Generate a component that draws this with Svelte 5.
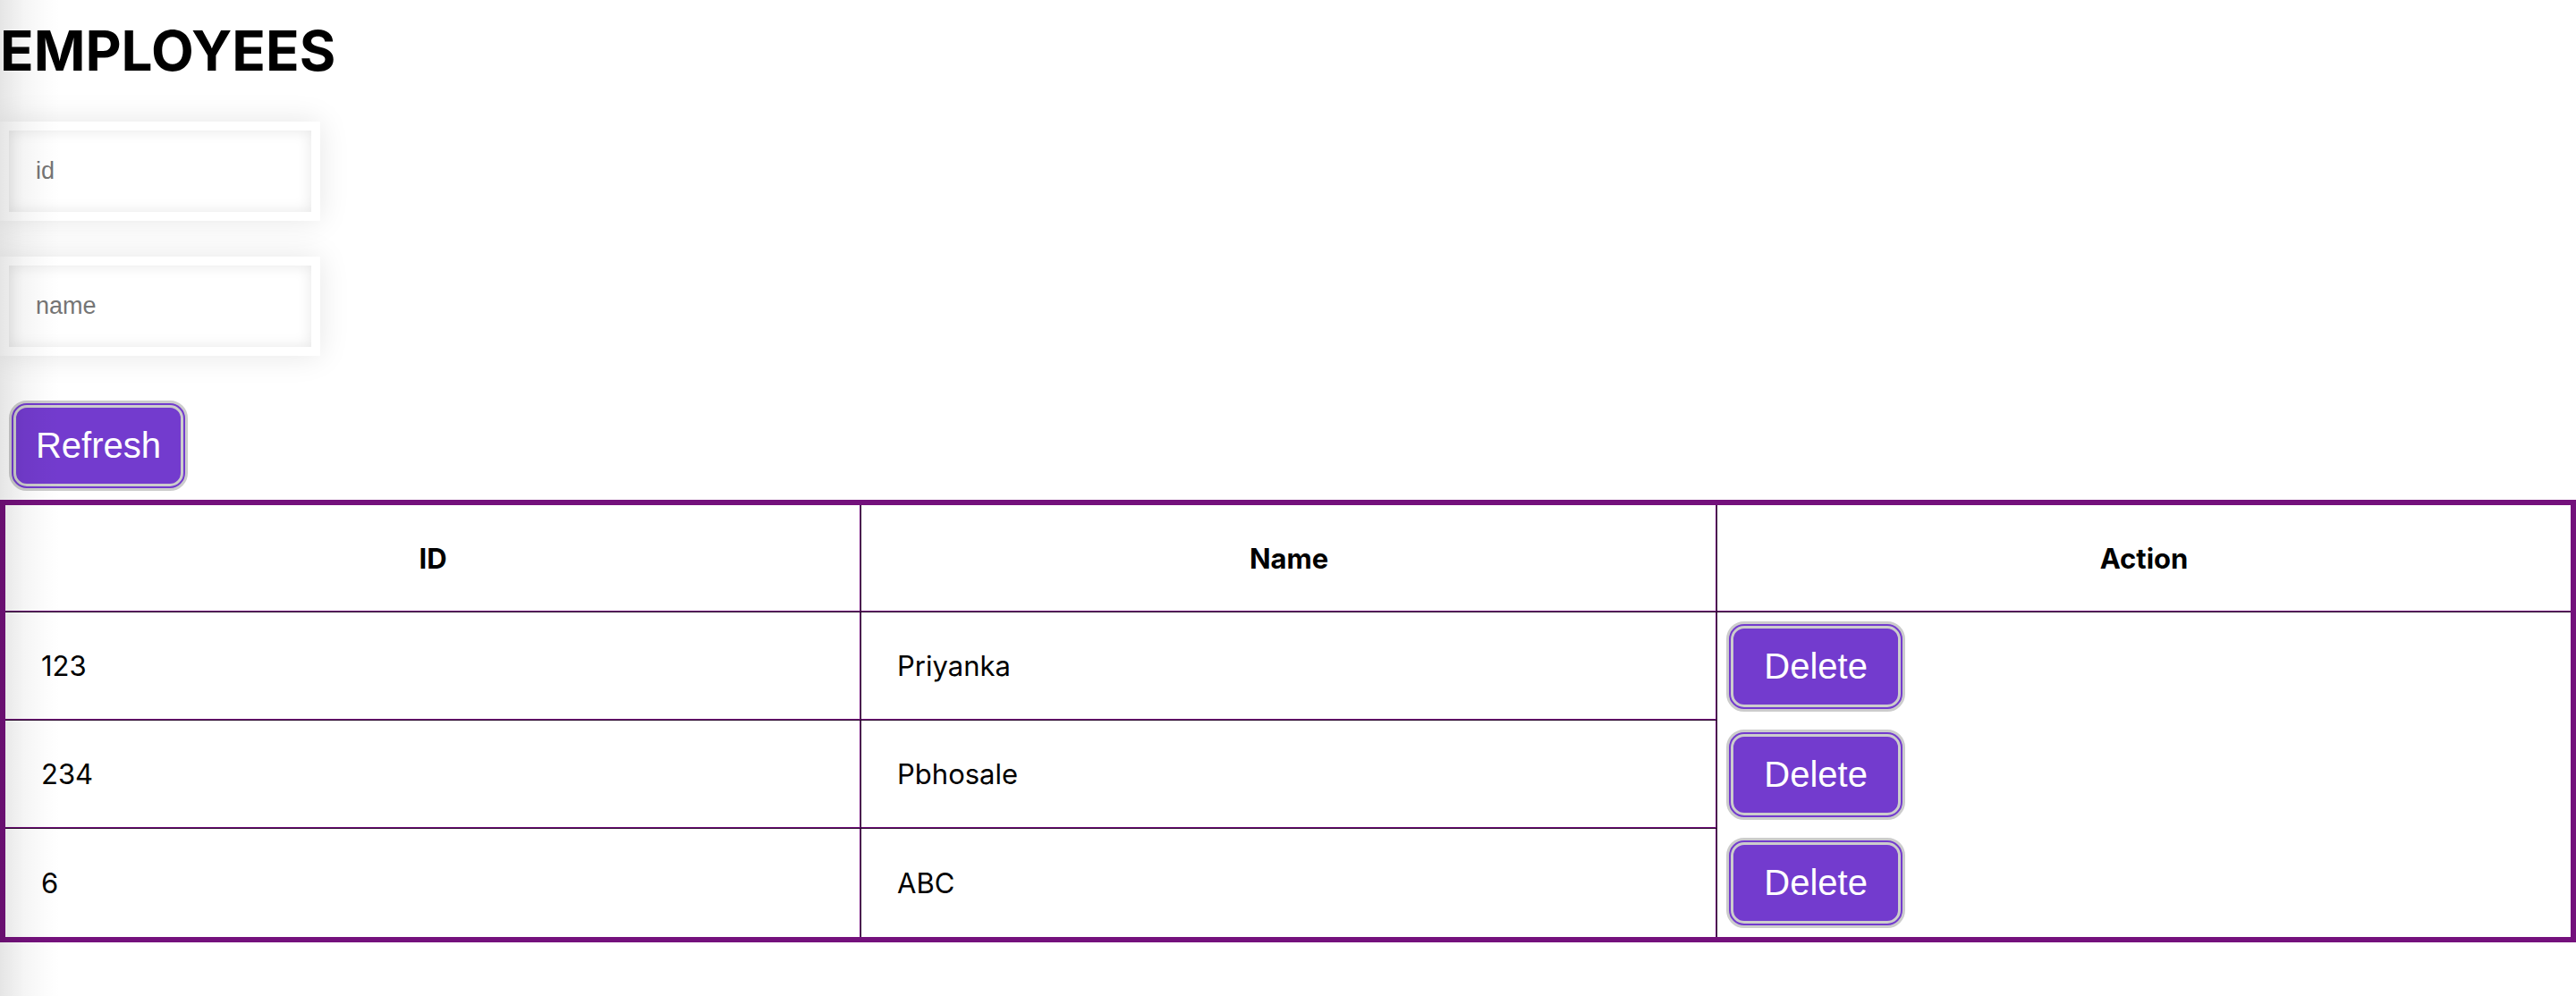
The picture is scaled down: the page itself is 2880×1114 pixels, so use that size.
<script>
  let id = $state('');
  let name = $state('');
  let employees = $state([
    { id: '123', name: 'Priyanka' },
    { id: '234', name: 'Pbhosale' },
    { id: '6', name: 'ABC' }
  ]);

  function refresh() {
    id = '';
    name = '';
  }

  function remove(target) {
    employees = employees.filter((employee) => employee.id !== target);
  }
</script>

<main>
  <h1>EMPLOYEES</h1>

  <form onsubmit={(event) => event.preventDefault()}>
    <input type="text" placeholder="id" aria-label="id" bind:value={id} />
    <input type="text" placeholder="name" aria-label="name" bind:value={name} />
    <button type="button" onclick={refresh}>Refresh</button>
  </form>

  <table>
    <thead>
      <tr>
        <th scope="col">ID</th>
        <th scope="col">Name</th>
        <th scope="col" class="last">Action</th>
      </tr>
    </thead>
    <tbody>
      {#each employees as employee (employee.id)}
        <tr>
          <td>{employee.id}</td>
          <td>{employee.name}</td>
          <td class="action">
            <button type="button" onclick={() => remove(employee.id)}>Delete</button>
          </td>
        </tr>
      {/each}
    </tbody>
  </table>
</main>

<style>
  :global(body) {
    margin: 0;
    background: #fff;
  }

  main {
    position: relative;
    min-height: 100vh;
    color: #000;
    font-family: Inter, 'Liberation Sans', sans-serif;
    font-size: 31px;
    line-height: 38px;
  }

  /* Soft shade along the left edge of the page */
  main::after {
    content: '';
    position: absolute;
    inset: 0 auto 0 0;
    width: 68px;
    pointer-events: none;
    background: linear-gradient(
      to right,
      rgba(0, 0, 0, 0.1),
      rgba(0, 0, 0, 0.04) 40%,
      rgba(0, 0, 0, 0.01) 75%,
      transparent
    );
  }

  h1 {
    margin: 0;
    padding: 19px 0 41px;
    font-size: 62px;
    line-height: 76px;
    font-weight: 700;
  }

  form {
    display: flex;
    flex-direction: column;
    align-items: flex-start;
  }

  input {
    box-sizing: border-box;
    width: 358px;
    height: 111px;
    margin: 0 0 40px;
    padding: 30px;
    border: 10px solid #fff;
    border-radius: 0;
    outline: none;
    background: rgba(255, 255, 255, 0.5);
    box-shadow:
      inset 0 0 16px rgba(0, 0, 0, 0.1),
      0 0 32px rgba(0, 0, 0, 0.1);
    font-family: 'Liberation Sans', Arial, sans-serif;
    font-size: 27px;
    line-height: 31px;
  }

  input::placeholder {
    color: #757575;
    opacity: 1;
  }

  button {
    display: block;
    box-sizing: border-box;
    width: 200px;
    height: 101px;
    margin: 10px;
    padding: 0 0 2px;
    border: 8px double #ccc;
    border-radius: 20px;
    background: #733bce;
    color: #fff;
    font-family: 'Liberation Sans', Arial, sans-serif;
    font-size: 40px;
    line-height: 46px;
    text-align: center;
    cursor: pointer;
  }

  table {
    width: 100%;
    table-layout: fixed;
    border-collapse: separate;
    border-spacing: 0;
    border: 6px solid #74117c;
  }

  /* Two-tone ridge: a purple line with a dark line beside it */
  th,
  td {
    box-sizing: border-box;
    padding: 40px;
    border: 0 solid #29062c;
    border-width: 0 1px 1px 0;
    box-shadow: inset -1px -1px #74117c;
    text-align: left;
  }

  th {
    padding-top: 41px;
    text-align: center;
    font-weight: 700;
  }

  .last {
    width: 33.26%;
    border-right-width: 0;
    box-shadow: inset 0 -1px #74117c;
  }

  tbody tr:last-child td {
    border-bottom-width: 0;
    box-shadow: inset -1px 0 #74117c;
  }

  tbody tr td.action,
  tbody tr:last-child td.action {
    padding: 0;
    border-width: 0;
    box-shadow: none;
  }
</style>
